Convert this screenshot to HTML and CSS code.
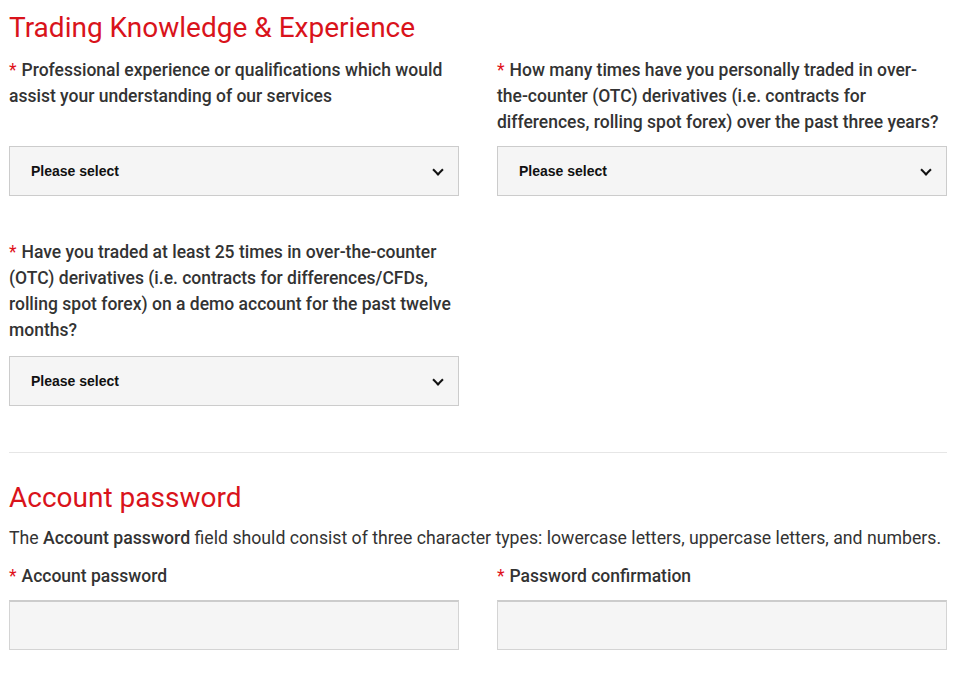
FILE: index.html
```html
<!DOCTYPE html>
<html lang="en">
<head>
  <meta charset="UTF-8">
  <meta name="viewport" content="width=device-width, initial-scale=1.0">
  <title>Trading Knowledge &amp; Experience</title>
  <link rel="stylesheet" href="styles.css">
</head>
<body>
  <div class="form">
    <section class="section">
      <h2 class="section-title">Trading Knowledge &amp; Experience</h2>
      <div class="fields">
        <div class="field">
          <label class="field-label" for="qualifications"><span class="req">*</span>Professional experience or qualifications which would assist your understanding of our services</label>
          <div class="select-wrap">
            <select id="qualifications"><option>Please select</option></select>
          </div>
        </div>
        <div class="field">
          <label class="field-label" for="otcTimes"><span class="req">*</span>How many times have you personally traded in over-the-counter (OTC) derivatives (i.e. contracts for differences, rolling spot forex) over the past three years?</label>
          <div class="select-wrap">
            <select id="otcTimes"><option>Please select</option></select>
          </div>
        </div>
        <div class="field field-wide">
          <label class="field-label" for="demoTrades"><span class="req">*</span>Have you traded at least 25 times in over-the-counter (OTC) derivatives (i.e. contracts for differences/CFDs, rolling spot forex) on a demo account for the past twelve months?</label>
          <div class="select-wrap">
            <select id="demoTrades"><option>Please select</option></select>
          </div>
        </div>
      </div>
    </section>

    <hr class="divider">

    <section class="section">
      <h2 class="section-title">Account password</h2>
      <p class="hint">The <strong>Account password</strong> field should consist of three character types: lowercase letters, uppercase letters, and numbers.</p>
      <div class="fields">
        <div class="field">
          <label class="field-label" for="password"><span class="req">*</span>Account password</label>
          <input type="password" id="password">
        </div>
        <div class="field">
          <label class="field-label" for="passwordConfirm"><span class="req">*</span>Password confirmation</label>
          <input type="password" id="passwordConfirm">
        </div>
      </div>
    </section>
  </div>
</body>
</html>
```

FILE: styles.css
```css
body {
  margin: 0;
  background: #ffffff;
  color: #333333;
  font-family: Roboto, "Liberation Sans", Arial, sans-serif;
}

.form {
  width: 938px;
  padding: 10px 0 0 9px;
}

.section-title {
  margin: 0 0 11px;
  font-size: 28px;
  font-weight: 400;
  line-height: 36px;
  color: #d9131b;
}

.fields {
  display: grid;
  grid-template-columns: 450px 450px;
  column-gap: 38px;
  row-gap: 43px;
}

.field {
  display: flex;
  flex-direction: column;
}

.field-label {
  flex: 1;
  margin-bottom: 11px;
  font-size: 17.5px;
  font-weight: 500;
  line-height: 26px;
  color: #333333;
}

.field-wide .field-label {
  margin-bottom: 13px;
}

.req {
  margin-right: 5px;
  color: #e0121b;
  font-weight: 400;
}

.select-wrap {
  position: relative;
}

.select-wrap::after {
  content: "";
  position: absolute;
  right: 17px;
  top: 20px;
  width: 6px;
  height: 6px;
  border-right: 2px solid #111111;
  border-bottom: 2px solid #111111;
  transform: rotate(45deg);
  pointer-events: none;
}

select {
  appearance: none;
  display: block;
  width: 100%;
  height: 50px;
  margin: 0;
  padding: 0 21px;
  background: #f5f5f5;
  border: 1px solid #cccccc;
  border-radius: 0;
  font-family: "Liberation Sans", Arial, sans-serif;
  font-size: 14px;
  font-weight: 700;
  color: #111111;
}

input {
  display: block;
  box-sizing: border-box;
  width: 100%;
  height: 50px;
  margin: 0;
  background: #f5f5f5;
  border: 1px solid #d4d4d4;
  border-top: 2px solid #cccccc;
  border-radius: 0;
}

.divider {
  margin: 46px 0 0;
  border: 0;
  border-top: 1px solid #e6e6e6;
}

.divider + .section {
  padding-top: 27px;
}

.divider + .section .section-title {
  margin-bottom: 9px;
}

.hint {
  margin: 0 0 12px;
  font-size: 17.7px;
  line-height: 26px;
  font-weight: 400;
}

.hint strong {
  font-weight: 500;
}
```
